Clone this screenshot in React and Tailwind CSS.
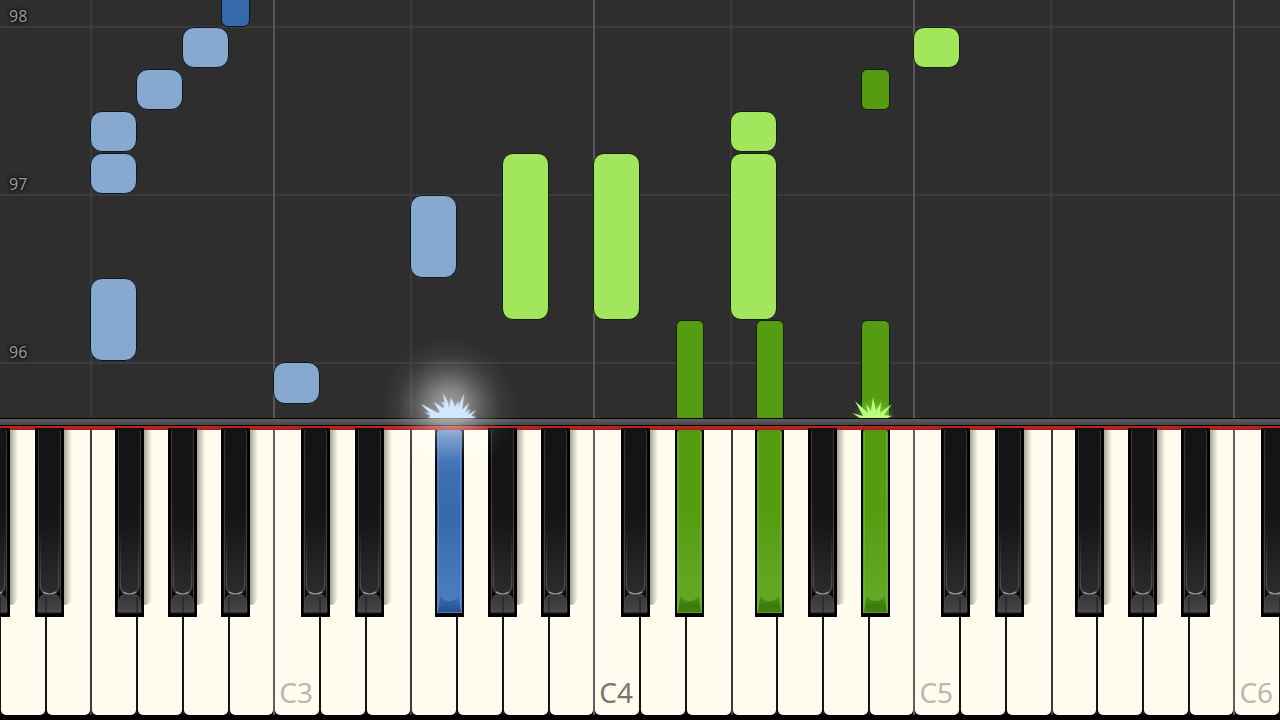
import React from 'react';

const BOARD_WIDTH = 1280;
const pct = (x) => `${(x / BOARD_WIDTH) * 100}%`;

const NOTE_STYLES = {
  lightBlue: 'rounded-[12px] bg-[#87a9d0] border-[#0d1722]',
  blue: 'rounded-[7px] bg-[#3569ab] border-[#0a1626]',
  lightGreen: 'rounded-[11px] bg-[#a2e65d] border-[#14200a]',
  green: 'rounded-[6px] bg-[#569c12] border-[#122406]',
};

// x and width in board units; bottom and height in pixels above the keyboard
const NOTES = [
  { x: 221, w: 29, bottom: 391, h: 50, kind: 'blue' },
  { x: 182, w: 47, bottom: 350, h: 41, kind: 'lightBlue' },
  { x: 136, w: 47, bottom: 308, h: 41, kind: 'lightBlue' },
  { x: 90, w: 47, bottom: 266, h: 41, kind: 'lightBlue' },
  { x: 90, w: 47, bottom: 224, h: 41, kind: 'lightBlue' },
  { x: 90, w: 47, bottom: 57, h: 83, kind: 'lightBlue' },
  { x: 273, w: 47, bottom: 14, h: 42, kind: 'lightBlue' },
  { x: 410, w: 47, bottom: 140, h: 83, kind: 'lightBlue' },
  { x: 502, w: 47, bottom: 98, h: 167, kind: 'lightGreen' },
  { x: 593, w: 47, bottom: 98, h: 167, kind: 'lightGreen' },
  { x: 730, w: 47, bottom: 98, h: 167, kind: 'lightGreen' },
  { x: 730, w: 47, bottom: 266, h: 41, kind: 'lightGreen' },
  { x: 913, w: 47, bottom: 350, h: 41, kind: 'lightGreen' },
  { x: 861, w: 29, bottom: 308, h: 41, kind: 'green' },
  { x: 676, w: 28, bottom: -10, h: 108, kind: 'green' },
  { x: 756, w: 28, bottom: -10, h: 108, kind: 'green' },
  { x: 861, w: 29, bottom: -10, h: 108, kind: 'green' },
];

const MEASURES = [98, 97, 96];

const WHITE_NAMES = ['C', 'D', 'E', 'F', 'G', 'A', 'B'];
const WHITE_KEYS = Array.from({ length: 28 }, (_, i) => {
  const step = i + 1;
  return { name: WHITE_NAMES[step % 7], octave: 2 + Math.floor(step / 7) };
});

const KEY_EDGES = {
  C: 'border-l-[#5e5e5a] border-r-[#141412]',
  D: 'border-l-[#141412] border-r-[#141412]',
  E: 'border-l-[#141412] border-r-[#3c3c3c]',
  F: 'border-l-[#3c3c3c] border-r-[#141412]',
  G: 'border-l-[#141412] border-r-[#141412]',
  A: 'border-l-[#141412] border-r-[#141412]',
  B: 'border-l-[#141412] border-r-[#5e5e5a]',
};

const BLACK_OFFSETS = [
  { name: 'C#', x: 27, seam: 19 },
  { name: 'D#', x: 81, seam: 11 },
  { name: 'F#', x: 161, seam: 22 },
  { name: 'G#', x: 214, seam: 15 },
  { name: 'A#', x: 267, seam: 8 },
];
const PRESSED = { 'F#3': 'blue', 'D#4': 'green', 'F#4': 'green', 'A#4': 'green' };
const BLACK_KEYS = [2, 3, 4, 5, 6]
  .flatMap((octave) =>
    BLACK_OFFSETS.map((k) => ({
      id: `${k.name}${octave}`,
      x: -46 + (octave - 2) * 320 + k.x,
      seam: k.seam,
    })),
  )
  .filter((k) => k.x < BOARD_WIDTH);

function Note({ note }) {
  return (
    <div
      className={`absolute border ${NOTE_STYLES[note.kind]}`}
      style={{ left: pct(note.x), width: pct(note.w), bottom: note.bottom, height: note.h }}
    />
  );
}

function IdleKeyArt({ seam }) {
  return (
    <svg viewBox="0 0 29 189" preserveAspectRatio="none" className="block h-full w-full" aria-hidden="true">
      <rect width="29" height="189" fill="#000" />
      <path d="M3 2Q3 0 5 0H24Q26 0 26 2V186H3Z" fill="url(#idleBody)" />
      <path d="M3.500 2V178M25.500 2V178" stroke="url(#idleEdge)" strokeWidth="1.2" fill="none" />
      <path d="M4.500 157Q5 166 9 166H20Q24 166 24.500 157L26 184H3Z" fill="#0c0c0c" />
      <path d="M5.500 100V158Q6 163 9 165M23.500 100V158Q23 163 20 165" fill="none" stroke="url(#idleRim)" strokeWidth="0.8" />
      <path d="M8 164Q14.500 168 21 164" fill="none" stroke="#959595" strokeWidth="1.700" />
      <path d="M3 184Q3 168 8 167Q14.500 166 21 167Q26 168 26 184Z" fill="url(#idleFront)" stroke="#606060" strokeWidth="0.700" />
      <path d={`M${seam} 169V185`} stroke="#121212" strokeWidth="0.800" />
    </svg>
  );
}

function PressedKeyArt({ tone }) {
  const blue = tone === 'blue';
  return (
    <svg viewBox="0 0 29 187" preserveAspectRatio="none" className="block h-full w-full" aria-hidden="true">
      <rect width="29" height="187" fill="#000" />
      <path d="M2 2Q2 0 4 0H25Q27 0 27 2V183H2Z" fill={blue ? 'url(#blueBody)' : 'url(#greenBody)'} />
      <path d="M3.500 2V181M25.500 2V181" stroke={blue ? '#6796d2' : '#76b93f'} strokeWidth="1" opacity="0.6" />
      <path d="M3 182L5.500 165Q8 171 14.500 171Q21 171 23.500 165L26 182Z" fill={blue ? 'url(#blueFront)' : 'url(#greenFront)'} />
      <path d="M3 182.500H26" stroke={blue ? '#4a7cbd' : '#5a9c20'} strokeWidth="0.800" />
    </svg>
  );
}

function Gradients() {
  return (
    <svg className="absolute h-0 w-0" aria-hidden="true">
      <defs>
        <linearGradient id="idleBody" x1="0" y1="0" x2="0" y2="1">
          <stop offset="0" stopColor="#131313" />
          <stop offset="0.500" stopColor="#151515" />
          <stop offset="0.870" stopColor="#2b2b2b" />
          <stop offset="1" stopColor="#111" />
        </linearGradient>
        <linearGradient id="idleEdge" gradientUnits="userSpaceOnUse" x1="0" y1="0" x2="0" y2="189">
          <stop offset="0" stopColor="#333" />
          <stop offset="1" stopColor="#484848" />
        </linearGradient>
        <linearGradient id="idleRim" gradientUnits="userSpaceOnUse" x1="0" y1="100" x2="0" y2="165">
          <stop offset="0" stopColor="#555" stopOpacity="0" />
          <stop offset="1" stopColor="#606060" />
        </linearGradient>
        <linearGradient id="idleFront" x1="0" y1="0" x2="0" y2="1">
          <stop offset="0" stopColor="#363636" />
          <stop offset="1" stopColor="#464646" />
        </linearGradient>
        <linearGradient id="greenBody" x1="0" y1="0" x2="0" y2="1">
          <stop offset="0" stopColor="#559b12" />
          <stop offset="0.500" stopColor="#579d14" />
          <stop offset="1" stopColor="#65ab26" />
        </linearGradient>
        <linearGradient id="greenFront" x1="0" y1="0" x2="0" y2="1">
          <stop offset="0" stopColor="#55991a" />
          <stop offset="0.600" stopColor="#3f7b0b" />
          <stop offset="1" stopColor="#437f10" />
        </linearGradient>
        <linearGradient id="blueBody" x1="0" y1="0" x2="0" y2="1">
          <stop offset="0" stopColor="#5a86c2" />
          <stop offset="0.180" stopColor="#3d6fb3" />
          <stop offset="0.500" stopColor="#3769ad" />
          <stop offset="1" stopColor="#4e80c4" />
        </linearGradient>
        <linearGradient id="blueFront" x1="0" y1="0" x2="0" y2="1">
          <stop offset="0" stopColor="#3d70b4" />
          <stop offset="1" stopColor="#24508f" />
        </linearGradient>
        <radialGradient id="blueGlow">
          <stop offset="0" stopColor="#fff" stopOpacity="0.550" />
          <stop offset="0.250" stopColor="#fff" stopOpacity="0.420" />
          <stop offset="0.500" stopColor="#fff" stopOpacity="0.200" />
          <stop offset="0.750" stopColor="#fff" stopOpacity="0.050" />
          <stop offset="1" stopColor="#fff" stopOpacity="0" />
        </radialGradient>
        <radialGradient id="greenGlow">
          <stop offset="0" stopColor="#b8ff70" stopOpacity="0.700" />
          <stop offset="1" stopColor="#7ed030" stopOpacity="0" />
        </radialGradient>
        <filter id="soften" x="-20%" y="-20%" width="140%" height="140%">
          <feGaussianBlur stdDeviation="1" />
        </filter>
      </defs>
    </svg>
  );
}

const BLUE_BURST =
  'M28 70L31 68L24 64L31 66L21 56L38 65L40 64L34 54L44 61L44 57L41 54L45 55L43 45L48 55L49 61L51 50L55 59L59 53L58 60L64 46L62 62L69 55L65 65L70 61L68 67L76 62L71 68L76 69L73 70Z';
const GREEN_BURST =
  'M10 40L2 35L13 38L5 23L18 35L16 26L21 33L23 19L26 33L31 24L30 35L42 26L34 37L42 38L37 40Z';

function BlueSpark() {
  return (
    <svg
      viewBox="0 0 160 160"
      className="pointer-events-none absolute -top-[88px] w-[160px]"
      style={{ left: pct(368) }}
      aria-hidden="true"
    >
      <circle cx="81" cy="77" r="70" fill="url(#blueGlow)" />
      <g transform="translate(32 18)">
        <path d={BLUE_BURST} fill="#cfe4ff" filter="url(#soften)" opacity="0.600" />
        <path d={BLUE_BURST} fill="#d2e6ff" />
      </g>
    </svg>
  );
}

function GreenSpark() {
  return (
    <svg
      viewBox="0 0 50 40"
      className="pointer-events-none absolute bottom-full w-[50px]"
      style={{ left: pct(850) }}
      aria-hidden="true"
    >
      <ellipse cx="24" cy="38" rx="21" ry="18" fill="url(#greenGlow)" />
      <path d={GREEN_BURST} fill="#b9ff7c" />
    </svg>
  );
}

function Lanes() {
  return (
    <div className="col-start-1 row-start-1 grid grid-cols-[repeat(28,minmax(0,1fr))]">
      <div className="col-span-2 border-r border-r-[#3b3b3b]" />
      <div className="col-span-4 border-x border-l-[#3b3b3b] border-r-[#585858]" />
      <div className="col-span-3 border-x border-l-[#585858] border-r-[#3b3b3b]" />
      <div className="col-span-4 border-x border-l-[#3b3b3b] border-r-[#585858]" />
      <div className="col-span-3 border-x border-l-[#585858] border-r-[#3b3b3b]" />
      <div className="col-span-4 border-x border-l-[#3b3b3b] border-r-[#585858]" />
      <div className="col-span-3 border-x border-l-[#585858] border-r-[#3b3b3b]" />
      <div className="col-span-4 border-x border-l-[#3b3b3b] border-r-[#585858]" />
      <div className="col-span-1 border-l border-l-[#585858]" />
    </div>
  );
}

function MeasureRows() {
  return (
    <div className="col-start-1 row-start-1 flex flex-col justify-end pb-[54px]">
      {MEASURES.map((m) => (
        <div key={m} className="flex h-[168px] shrink-0 flex-col justify-end border-b-2 border-[#3b3b3b]">
          <span className="pl-[9px] text-base leading-5 text-[#999] [text-shadow:0_0_1px_#111,0_0_2px_#111,0_0_3px_#111,0_0_4px_#111]">
            {m}
          </span>
        </div>
      ))}
    </div>
  );
}

function Roll() {
  return (
    <section
      aria-label="Falling notes"
      className="relative grid min-h-0 flex-1 grid-rows-[minmax(0,1fr)] overflow-hidden bg-[#2e2e2e]"
    >
      <MeasureRows />
      <Lanes />
      {NOTES.map((n) => (
        <Note key={`${n.x}-${n.bottom}`} note={n} />
      ))}
    </section>
  );
}

function WhiteKey({ name, octave }) {
  const tone = octave === 4 ? 'text-[#77776b]' : 'text-[#bab8ac]';
  return (
    <li className={`flex min-w-0 flex-1 border-x bg-black ${KEY_EDGES[name]}`}>
      <button
        type="button"
        aria-label={`${name}${octave}`}
        className="flex min-w-0 flex-1 items-end rounded-b-[5px] bg-[#fffcef] pb-[5px] pl-1"
      >
        {name === 'C' && <span className={`text-[28px] leading-9 ${tone}`}>{`C${octave}`}</span>}
      </button>
    </li>
  );
}

function BlackKey({ id, x, seam }) {
  const tone = PRESSED[id];
  return (
    <button
      type="button"
      aria-label={id}
      aria-pressed={Boolean(tone)}
      className={`absolute ${tone ? 'top-0 h-[187px]' : '-top-0.5 h-[189px]'}`}
      style={{ left: pct(x), width: pct(29) }}
    >
      {!tone && (
        <span className="absolute top-0.5 bottom-3 left-full w-2 rounded-br-lg bg-linear-to-r from-[#807d74]/70 to-transparent" />
      )}
      {tone ? <PressedKeyArt tone={tone} /> : <IdleKeyArt seam={seam} />}
    </button>
  );
}

function Keyboard() {
  return (
    <section aria-label="Keyboard" className="relative shrink-0 bg-black pb-[5px]">
      <div className="h-2 border-y border-black bg-linear-to-b from-[#606060] to-[#444]" />
      <div className="h-1 bg-linear-to-b from-[#bd2927] to-[#a51b1b]" />
      <div className="relative">
        <ul className="flex h-[285px]">
          {WHITE_KEYS.map((k) => (
            <WhiteKey key={`${k.name}${k.octave}`} {...k} />
          ))}
        </ul>
        {BLACK_KEYS.map((k) => (
          <BlackKey key={k.id} {...k} />
        ))}
      </div>
      <BlueSpark />
      <GreenSpark />
    </section>
  );
}

export default function App() {
  return (
    <main className="flex h-screen flex-col overflow-hidden bg-black font-['Noto_Sans','Open_Sans',sans-serif]">
      <Gradients />
      <Roll />
      <Keyboard />
    </main>
  );
}
